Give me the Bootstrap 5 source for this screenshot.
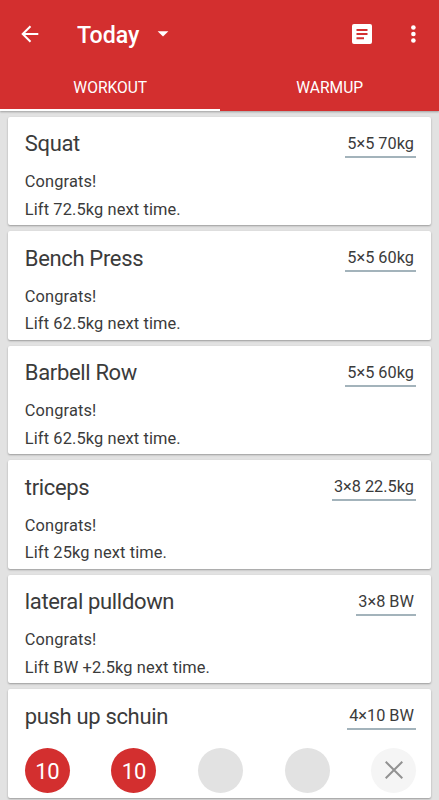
<!DOCTYPE html>
<html lang="en">
<head>
<meta charset="utf-8">
<meta name="viewport" content="width=device-width, initial-scale=1">
<title>Today</title>
<link href="https://cdn.jsdelivr.net/npm/bootstrap@5.3.0/dist/css/bootstrap.min.css" rel="stylesheet">
<style>
body{font-family:Roboto,sans-serif;background:#e2e2e2;color:#3b3b3b;height:800px;overflow:hidden}
.app-header{background:#d32f2f;color:#fff;height:111px;box-shadow:0 1px 2px rgba(0,0,0,.3)}
.toolbar{height:68px;padding-left:19px;padding-right:17px}
.app-title{font-size:23.2px;font-weight:500;line-height:28px;margin:2px 0 0 36px}
.caret{margin-left:18px}
.dots{margin-left:32px}
.tab-bar{height:43px}
.tab-bar .nav-link{color:#fff;font-size:15.6px;line-height:20px;padding:10px 0 0 1px;border-bottom:2px solid transparent;border-radius:0}
.tab-bar .nav-link.active{border-color:#fff}
.exercises{padding:5.7px 8.3px 0;gap:5.9px}
.exercise{height:108.6px;padding:0 14.4px 0 16.5px;border:0;border-radius:2px;box-shadow:0 1px 2px rgba(0,0,0,.32);color:inherit;flex:none}
.exercise h2{font-size:22px;font-weight:400;line-height:28px;margin:13.6px 0 0;letter-spacing:-.34px}
.target{font-size:16.3px;line-height:20px;padding:0 2.4px 2px;margin-top:16.9px;border-bottom:2px solid #a3b3bb}
.exercise p{font-size:16.4px;line-height:27.4px;margin:0;letter-spacing:.12px}
.result{margin-top:9.9px}
.set{width:45px;height:45px;background:#e2e2e2;font-size:22px;letter-spacing:-.3px;padding:3px 0 0}
.set.done{background:#d32f2f;color:#fff}
.set.close-set{background:#f5f5f5;padding:0}
.sets{margin-top:17.2px}
</style>
</head>
<body>
<header class="app-header d-flex flex-column position-relative">
  <div class="toolbar d-flex align-items-center">
    <svg width="22" height="22" viewBox="0 0 22 22" fill="none" stroke="#fff" stroke-width="2"><path d="M19.3 11H4M11.5 3.2 3.7 11l7.8 7.8"/></svg>
    <h1 class="app-title">Today</h1>
    <svg class="caret" width="12" height="6" viewBox="0 0 12 6"><path d="M.6.2h10.8L6 5.6z" fill="#fff"/></svg>
    <svg class="ms-auto" width="20" height="20" viewBox="0 0 20 20"><rect width="20" height="20" rx="2" fill="#fff"/><path d="M4.5 6h11M4.5 10h11M4.5 14.2h7.5" stroke="#d32f2f" stroke-width="2"/></svg>
    <svg class="dots" width="18" height="20" viewBox="0 0 18 20" fill="#fff"><circle cx="9.4" cy="3.5" r="2.3"/><circle cx="9.4" cy="10" r="2.3"/><circle cx="9.4" cy="16.5" r="2.3"/></svg>
  </div>
  <nav class="tab-bar nav nav-fill flex-nowrap">
    <a class="nav-link active w-50" href="#">WORKOUT</a>
    <a class="nav-link w-50" href="#">WARMUP</a>
  </nav>
</header>
<main class="exercises d-flex flex-column">
  <section class="exercise card">
    <div class="d-flex justify-content-between align-items-start"><h2>Squat</h2><span class="target">5×5 70kg</span></div>
    <div class="result"><p>Congrats!</p><p>Lift 72.5kg next time.</p></div>
  </section>
  <section class="exercise card">
    <div class="d-flex justify-content-between align-items-start"><h2>Bench Press</h2><span class="target">5×5 60kg</span></div>
    <div class="result"><p>Congrats!</p><p>Lift 62.5kg next time.</p></div>
  </section>
  <section class="exercise card">
    <div class="d-flex justify-content-between align-items-start"><h2>Barbell Row</h2><span class="target">5×5 60kg</span></div>
    <div class="result"><p>Congrats!</p><p>Lift 62.5kg next time.</p></div>
  </section>
  <section class="exercise card">
    <div class="d-flex justify-content-between align-items-start"><h2>triceps</h2><span class="target">3×8 22.5kg</span></div>
    <div class="result"><p>Congrats!</p><p>Lift 25kg next time.</p></div>
  </section>
  <section class="exercise card">
    <div class="d-flex justify-content-between align-items-start"><h2>lateral pulldown</h2><span class="target">3×8 BW</span></div>
    <div class="result"><p>Congrats!</p><p>Lift BW +2.5kg next time.</p></div>
  </section>
  <section class="exercise card">
    <div class="d-flex justify-content-between align-items-start"><h2>push up schuin</h2><span class="target">4×10 BW</span></div>
    <div class="sets d-flex justify-content-between">
      <span class="set done rounded-circle d-flex align-items-center justify-content-center">10</span>
      <span class="set done rounded-circle d-flex align-items-center justify-content-center">10</span>
      <span class="set rounded-circle"></span>
      <span class="set rounded-circle"></span>
      <span class="set close-set rounded-circle d-flex align-items-center justify-content-center"><svg width="18" height="18" viewBox="0 0 18 18" stroke="#929292" stroke-width="2"><path d="m.7.7 16.6 16.6M17.3.7.7 17.3"/></svg></span>
    </div>
  </section>
</main>
<script src="https://cdn.jsdelivr.net/npm/bootstrap@5.3.0/dist/js/bootstrap.bundle.min.js"></script>
</body>
</html>
